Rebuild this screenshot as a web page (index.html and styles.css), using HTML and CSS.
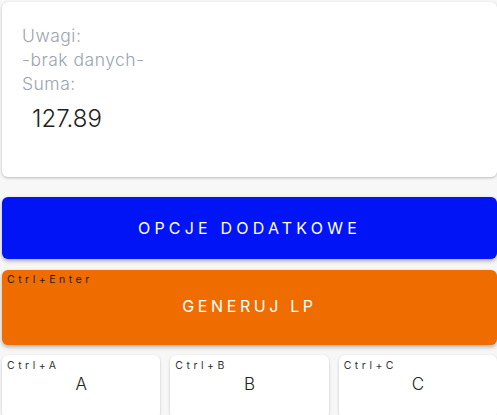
FILE: index.html
```html
<!DOCTYPE html>
<html>
<head>
<meta charset="utf-8">
<link rel="stylesheet" href="styles.css">
</head>
<body>
<div class="page">
  <section class="card">
    <div class="label">Uwagi:</div>
    <div class="label">-brak danych-</div>
    <div class="label">Suma:</div>
    <div class="sum">127.89</div>
  </section>
  <button class="btn btn-blue">OPCJE DODATKOWE</button>
  <button class="btn btn-orange">
    <span class="hint hint-light">Ctrl+Enter</span>
    <span class="btn-text">GENERUJ LP</span>
  </button>
  <div class="row">
    <button class="small"><span class="hint">Ctrl+A</span><span class="small-text">A</span></button>
    <button class="small"><span class="hint">Ctrl+B</span><span class="small-text">B</span></button>
    <button class="small"><span class="hint">Ctrl+C</span><span class="small-text">C</span></button>
  </div>
</div>
</body>
</html>
```

FILE: styles.css
```css
html, body {
  margin: 0;
  padding: 0;
  background: #f7f7f7;
  font-family: "Inter", "Noto Sans", sans-serif;
  overflow: hidden;
}
.page {
  padding: 2px 0 0 2px;
  display: flex;
  flex-direction: column;
}
.card {
  background: #fff;
  border-radius: 6px;
  box-shadow: 0 1px 3px rgba(0,0,0,0.25);
  height: 175px;
  box-sizing: border-box;
  padding: 22px 20px 0 20px;
}
.label {
  color: #9ca3af;
  font-size: 17.5px;
  font-weight: 300;
  line-height: 24px;
  letter-spacing: 0.5px;
}
.sum {
  color: #222;
  font-size: 24px;
  font-weight: 300;
  padding: 8px 0 0 10px;
  line-height: 30px;
}
.btn {
  border: none;
  border-radius: 6px;
  color: #fff;
  font-family: inherit;
  font-size: 16px;
  letter-spacing: 4.2px;
  margin: 0;
  padding: 0;
  box-shadow: 0 2px 4px rgba(0,0,0,0.3);
}
.btn-blue {
  background: #0014f5;
  height: 62px;
  margin-top: 20px;
}
.btn-orange {
  background: #ef6c00;
  height: 75px;
  margin-top: 11px;
  display: flex;
  flex-direction: column;
  align-items: stretch;
}
.hint {
  font-size: 10.5px;
  letter-spacing: 3.5px;
  color: #333;
  text-align: left;
  padding: 3px 0 0 5px;
  line-height: 14px;
  display: block;
}
.hint-light {
  color: #222;
}
.btn-text {
  display: block;
  text-align: center;
  padding-top: 9px;
  letter-spacing: 3.6px;
}
.row {
  display: grid;
  grid-template-columns: 1fr 1fr 1fr;
  gap: 10px;
  margin-top: 10px;
}
.small {
  background: #fff;
  border: none;
  border-radius: 6px;
  box-shadow: 0 1px 3px rgba(0,0,0,0.2);
  height: 64px;
  margin: 0;
  padding: 0;
  font-family: inherit;
  display: flex;
  flex-direction: column;
  align-items: stretch;
}
.small .hint {
  padding-top: 4px;
}
.small-text {
  display: block;
  text-align: center;
  font-size: 17px;
  font-weight: 300;
  color: #222;
  padding-top: 1px;
}
```
